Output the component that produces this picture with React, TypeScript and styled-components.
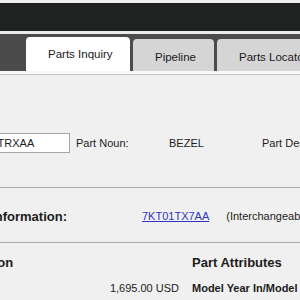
import styled, { createGlobalStyle } from "styled-components";

const GlobalStyle = createGlobalStyle`
  html, body {
    margin: 0;
    padding: 0;
    background: #f0f0f0;
    overflow: hidden;
  }
  body {
    font-family: "Liberation Sans", Arial, sans-serif;
    color: #1c1c1c;
  }
`;

const Page = styled.div`
  width: 300px;
  height: 300px;
  overflow: hidden;
  background: #f0f0f0;
`;

const Header = styled.div`
  margin-top: 3px;
  height: 28px;
  background: #202121;
`;

const HeaderGap = styled.div`
  height: 3px;
  background: #ebebeb;
`;

const TabBar = styled.div`
  height: 37px;
  background: #4b4b4b;
  display: flex;
  align-items: flex-end;
  gap: 3px;
  padding-left: 26px;
  white-space: nowrap;
`;

const Tab = styled.div<{ $active?: boolean; $width: number }>`
  flex: 0 0 auto;
  width: ${(p) => p.$width}px;
  height: ${(p) => (p.$active ? 34 : 32)}px;
  box-sizing: border-box;
  padding-left: 22px;
  display: flex;
  align-items: center;
  padding-top: ${(p) => (p.$active ? 0 : 3)}px;
  background: ${(p) => (p.$active ? "#ffffff" : "#d5d5d5")};
  border-radius: 4px 4px 0 0;
  font-size: 11.5px;
  color: #1a1a1a;
`;

const TabRule = styled.div`
  height: 3px;
  background: #f8f8f8;
  border-bottom: 1px solid #c4c4c4;
`;

// the screen is scrolled sideways, so the content starts left of the window
const Content = styled.div`
  margin-left: -150px;
  width: 600px;
  font-size: 11px;
`;

const Section = styled.div<{ $top: number; $bottom: number; $rule?: boolean }>`
  padding-top: ${(p) => p.$top}px;
  padding-bottom: ${(p) => p.$bottom}px;
  border-bottom: ${(p) => (p.$rule ? "1px solid #a9a9a9" : "none")};
`;

const Row = styled.div<{ $height: number }>`
  display: flex;
  align-items: center;
  height: ${(p) => p.$height}px;
  white-space: nowrap;
`;

const Cell = styled.div<{ $width: number }>`
  flex: 0 0 ${(p) => p.$width}px;
`;

const Input = styled.div`
  flex: 0 0 106px;
  height: 20px;
  box-sizing: border-box;
  margin-right: 6px;
  background: #ffffff;
  border: 1px solid #a6a6a6;
  padding-left: 2px;
  display: flex;
  align-items: center;
  font-size: 11px;
  overflow: hidden;
`;

const SectionLabel = styled.div`
  flex: 0 0 292px;
  box-sizing: border-box;
  padding-right: 75px;
  text-align: right;
  font-size: 13px;
  font-weight: bold;
`;

const Link = styled.a`
  color: #2f35c2;
  text-decoration: underline;
  margin-right: 17px;
`;

const Columns = styled.div`
  display: grid;
  grid-template-columns: 285px 1fr;
  column-gap: 13px;
  padding-left: 44px;
`;

const Heading = styled.div`
  font-size: 13px;
  font-weight: bold;
  line-height: 16px;
  white-space: nowrap;
`;

const PairRow = styled.div`
  display: flex;
  justify-content: space-between;
  line-height: 14px;
  margin-top: 10px;
  white-space: nowrap;
`;

const AttrLabel = styled.div`
  font-weight: bold;
  line-height: 14px;
  margin-top: 10px;
  white-space: nowrap;
`;

export default function App() {
  return (
    <Page>
      <GlobalStyle />
      <Header />
      <HeaderGap />
      <TabBar>
        <Tab $active $width={104}>Parts Inquiry</Tab>
        <Tab $width={81}>Pipeline</Tab>
        <Tab $width={110}>Parts Locator</Tab>
      </TabBar>
      <TabRule />
      <Content>
        <Section $top={58} $bottom={34} $rule>
          <Row $height={20}>
            <Cell $width={114}>Part Number:</Cell>
            <Input>68146TRXAA</Input>
            <Cell $width={93}>Part Noun:</Cell>
            <Cell $width={93}>BEZEL</Cell>
            <Cell $width={120}>Part Description:</Cell>
          </Row>
        </Section>
        <Section $top={21} $bottom={19} $rule>
          <Row $height={14}>
            <SectionLabel>Interchangeability Information:</SectionLabel>
            <Link href="#">7KT01TX7AA</Link>
            <span>(Interchangeable with earlier part)</span>
          </Row>
        </Section>
        <Section $top={12} $bottom={0}>
          <Columns>
            <div>
              <Heading>Pricing Information</Heading>
              <PairRow>
                <span>List Price:</span>
                <span>1,695.00 USD</span>
              </PairRow>
            </div>
            <div>
              <Heading>Part Attributes</Heading>
              <AttrLabel>Model Year In/Model Year Out:</AttrLabel>
            </div>
          </Columns>
        </Section>
      </Content>
    </Page>
  );
}
